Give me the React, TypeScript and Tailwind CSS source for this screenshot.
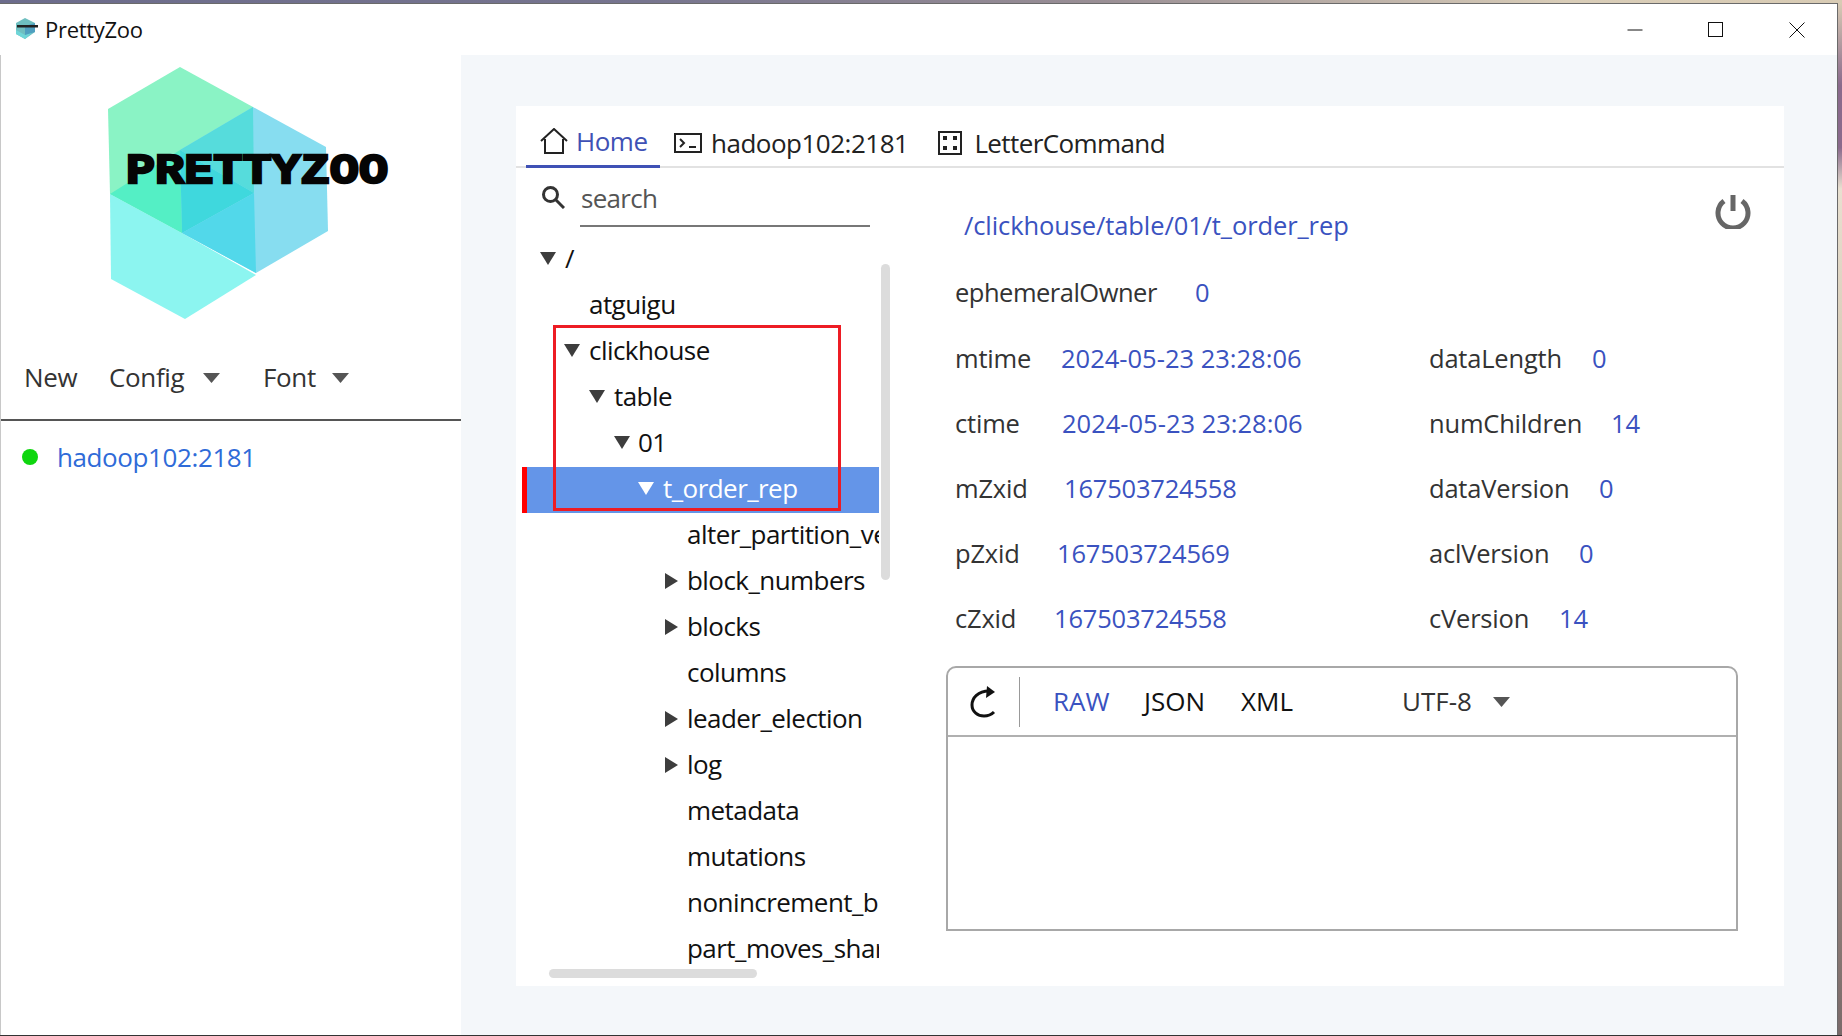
import React from "react";

const Caret = ({ dir = "down", color = "#3d3d3d", w = 16, h = 13 }: { dir?: "down" | "right"; color?: string; w?: number; h?: number }) => (
  <svg width={dir === "down" ? w : h} height={dir === "down" ? h : w} viewBox={dir === "down" ? "0 0 16 13" : "0 0 13 16"} preserveAspectRatio="none" className="shrink-0">
    <polygon points={dir === "down" ? "0,0 16,0 8,13" : "0,0 13,8 0,16"} fill={color} />
  </svg>
);

const tree: { t: string; caret: string; text: string; c?: "down" | "right"; sel?: boolean }[] = [
  { t: "/", caret: "left-[18px]", text: "left-[43px]", c: "down" },
  { t: "atguigu", caret: "", text: "left-[67px]" },
  { t: "clickhouse", caret: "left-[42px]", text: "left-[67px]", c: "down" },
  { t: "table", caret: "left-[67px]", text: "left-[92px]", c: "down" },
  { t: "01", caret: "left-[92px]", text: "left-[116px]", c: "down" },
  { t: "t_order_rep", caret: "left-[111px]", text: "left-[136px]", c: "down", sel: true },
  { t: "alter_partition_version", caret: "", text: "left-[165px]" },
  { t: "block_numbers", caret: "left-[143px]", text: "left-[165px]", c: "right" },
  { t: "blocks", caret: "left-[143px]", text: "left-[165px]", c: "right" },
  { t: "columns", caret: "", text: "left-[165px]" },
  { t: "leader_election", caret: "left-[143px]", text: "left-[165px]", c: "right" },
  { t: "log", caret: "left-[143px]", text: "left-[165px]", c: "right" },
  { t: "metadata", caret: "", text: "left-[165px]" },
  { t: "mutations", caret: "", text: "left-[165px]" },
  { t: "nonincrement_block_numbers", caret: "", text: "left-[165px]" },
  { t: "part_moves_shard", caret: "", text: "left-[165px]" },
];

const rows: { a: string; aw: string; b: string; bt: string; c?: string; cw?: string; d?: string }[] = [
  { a: "ephemeralOwner", aw: "w-[240px] tracking-[-0.5px]", b: "0", bt: "" },
  { a: "mtime", aw: "w-[106px] tracking-[-0.2px]", b: "2024-05-23 23:28:06", bt: "", c: "dataLength", cw: "w-[163px]", d: "0" },
  { a: "ctime", aw: "w-[107px] tracking-[-0.2px]", b: "2024-05-23 23:28:06", bt: "", c: "numChildren", cw: "w-[182px]", d: "14" },
  { a: "mZxid", aw: "w-[109px] tracking-[-0.2px]", b: "167503724558", bt: "tracking-[-0.2px]", c: "dataVersion", cw: "w-[170px]", d: "0" },
  { a: "pZxid", aw: "w-[102px] tracking-[-0.2px]", b: "167503724569", bt: "tracking-[-0.2px]", c: "aclVersion", cw: "w-[150px]", d: "0" },
  { a: "cZxid", aw: "w-[99px] tracking-[-0.2px]", b: "167503724558", bt: "tracking-[-0.2px]", c: "cVersion", cw: "w-[130px]", d: "14" },
];

const Logo = () => (
  <svg width="300" height="270" viewBox="100 60 300 270" className="block">
    <polygon points="180,67 253,107 254,193 182,233 110,194 108,109" fill="#8af3c5" />
    <polygon points="253,107 326,147 328,231 256,273 182,233 180,150" fill="#87ddf0" />
    <polygon points="110,194 182,233 256,275 185,319 111,279" fill="#8cf5f0" />
    <polygon points="253,107 254,193 180,150" fill="#56dcdc" />
    <polygon points="110,194 180,150 182,233" fill="#54efc5" />
    <polygon points="180,150 254,193 182,233" fill="#3fd8dd" />
    <polygon points="254,193 256,273 182,233" fill="#52d8ea" />
    <text x="126" y="183" textLength="262" lengthAdjust="spacingAndGlyphs" fontFamily="'Liberation Mono', monospace" fontWeight="700" fontSize="42" fill="#050505" stroke="#050505" strokeWidth="2.4">PRETTYZOO</text>
  </svg>
);

export default function App() {
  return (
    <div className="w-[1842px] h-[1036px] overflow-hidden flex flex-col bg-[linear-gradient(90deg,#6c6c8c_0%,#77758f_35%,#9a8f95_60%,#d9cdb8_85%,#d8cbb4_100%)] font-['Open_Sans','Noto_Sans',sans-serif]">
      <div className="h-[3px] shrink-0" />
      <div className="flex-1 min-h-0 flex">
        <div className="w-[1838px] flex flex-col border-t border-r border-[#6a6a6a] bg-white">
          {/* title bar */}
          <div className="h-[51px] shrink-0 flex items-center bg-white">
            <svg width="24" height="22" viewBox="0 0 24 22" className="ml-[15px] mt-[-2px]">
              <polygon points="1,5 10,0 20,5 20,14 10,21 1,16" fill="#6fbfc0" />
              <polygon points="1,12 10,17 20,12 10,21 1,16" fill="#6fd6d8" />
              <polygon points="10,8 20,5 20,14 10,17" fill="#4f9fc0" />
              <rect x="2" y="7" width="21" height="2.5" fill="#222" />
            </svg>
            <span className="ml-[6px] text-[22px] text-[#111] tracking-[-0.3px] pb-[1px]">PrettyZoo</span>
            <div className="ml-auto flex items-center mr-[32px]">
              <svg width="16" height="16" viewBox="0 0 16 16" className="mr-[65px]"><path d="M0.5 8h15" stroke="#111" strokeWidth="1" /></svg>
              <svg width="16" height="16" viewBox="0 0 16 16" className="mr-[65px]"><rect x="0.5" y="0.5" width="14" height="14" fill="none" stroke="#111" strokeWidth="1" /></svg>
              <svg width="16" height="16" viewBox="0 0 16 16"><path d="M0.5 0.5l15 15M15.5 0.5l-15 15" stroke="#111" strokeWidth="1" /></svg>
            </div>
          </div>
          <div className="flex-1 min-h-0 flex">
            {/* sidebar */}
            <div className="w-[461px] shrink-0 bg-white border-l-[1px] border-[#c8c8c8] flex flex-col">
              <div className="h-[281px] shrink-0 pl-[99px] pt-[5px] overflow-hidden"><Logo /></div>
              <div className="h-[85px] shrink-0 flex items-center text-[26px] text-[#333] tracking-[-0.35px] border-b-2 border-[#555]">
                <span className="ml-[23px] w-[85px]">New</span>
                <span className="w-[94px]">Config</span>
                <Caret dir="down" color="#555" w={17} h={10} />
                <span className="ml-[43px] w-[69px]">Font</span>
                <Caret dir="down" color="#555" w={17} h={10} />
              </div>
              <div className="flex items-center h-[72px] pl-[21px]">
                <span className="w-[16px] h-[16px] rounded-full bg-[#0fd60f]" />
                <span className="ml-[19px] text-[26px] text-[#2f6bd8] tracking-[-0.4px]">hadoop102:2181</span>
              </div>
            </div>
            {/* main */}
            <div className="flex-1 min-w-0 bg-[#f4f7fa] pt-[51px] pl-[55px] pr-[53px] pb-[49px]">
              <div className="h-full bg-white flex flex-col">
                {/* tabs */}
                <div className="h-[62px] shrink-0 flex items-stretch border-b-2 border-[#e2e2e2] text-[26px] tracking-[-0.5px]">
                  <div className="ml-[10px] w-[134px] flex items-center border-b-[3px] border-[#3f51b5] -mb-[2px] pl-[14px] pt-[11px] text-[#3f51b5]">
                    <svg width="28" height="26" viewBox="0 0 28 26" fill="none" stroke="#222" strokeWidth="2">
                      <path d="M1 13L14 1l13 12" />
                      <path d="M5 11v14h18V11" />
                    </svg>
                    <span className="ml-[8px]">Home</span>
                  </div>
                  <div className="flex items-center ml-[14px] pt-[14px] text-[#222]">
                    <svg width="28" height="20" viewBox="0 0 28 20" fill="none" stroke="#222" strokeWidth="2">
                      <rect x="1" y="1" width="26" height="18" />
                      <path d="M6 6l4 4-4 4M15 14h7" />
                    </svg>
                    <span className="ml-[9px]">hadoop102:2181</span>
                  </div>
                  <div className="flex items-center ml-[30px] pt-[14px] text-[#222]">
                    <svg width="24" height="24" viewBox="0 0 24 24" fill="none">
                      <rect x="1" y="1" width="22" height="22" stroke="#222" strokeWidth="2" />
                      <rect x="5" y="5" width="4" height="4" fill="#222" /><rect x="15" y="5" width="4" height="4" fill="#222" />
                      <rect x="5" y="15" width="4" height="4" fill="#222" /><rect x="15" y="15" width="4" height="4" fill="#222" />
                    </svg>
                    <span className="ml-[12px] tracking-[-0.6px]">LetterCommand</span>
                  </div>
                </div>
                <div className="flex-1 min-h-0 flex">
                  {/* tree column */}
                  <div className="w-[375px] shrink-0 flex flex-col relative">
                    <div className="h-[69px] shrink-0 flex items-start pl-[25px] pt-[17px]">
                      <svg width="24" height="24" viewBox="0 0 24 24" fill="none" stroke="#333" strokeWidth="3">
                        <circle cx="9.5" cy="9.5" r="7" /><path d="M15 15l8 8" />
                      </svg>
                      <div className="ml-[15px] w-[290px] h-[43px] border-b-2 border-[#777] text-[26px] leading-[29px] text-[#555] tracking-[-0.7px] pl-[1px] -mt-[1px]">search</div>
                    </div>
                    <div className="flex-1 min-h-0 flex">
                      <div className="w-[357px] ml-[6px] h-[736px] overflow-hidden text-[26px] text-[#111] tracking-[-0.55px]">
                        {tree.map((r) => (
                          <div key={r.t} className={r.sel ? "h-[46px] flex items-center pb-[4px] relative whitespace-nowrap bg-[#6495e8] text-white border-l-[5px] border-[#ff0000]" : "h-[46px] flex items-center pb-[4px] relative whitespace-nowrap"}>
                            {r.c && (
                              <span className={(r.c === "right" ? "absolute top-[14px] " : "absolute top-[15px] ") + r.caret}>
                                <Caret dir={r.c} color={r.sel ? "#fff" : "#3d3d3d"} />
                              </span>
                            )}
                            <span className={"absolute " + r.text}>{r.t}</span>
                          </div>
                        ))}
                      </div>
                      <div className="w-[9px] ml-[2px] mt-[27px] h-[316px] rounded-full bg-[#dcdcdc]" />
                    </div>
                    <div className="absolute left-[33px] bottom-[8px] w-[208px] h-[9px] rounded-full bg-[#dcdcdc]" />
                    <div className="absolute left-[37px] top-[157px] w-[288px] h-[186px] border-[3px] border-[#ed1c24]" />
                  </div>
                  {/* details */}
                  <div className="flex-1 min-w-0 pl-[55px] text-[25.5px]">
                    <div className="h-[77px] flex items-center pt-[38px]">
                      <span className="ml-[18px] text-[#3a52c0] tracking-[-0.1px]">/clickhouse/table/01/t_order_rep</span>
                    </div>
                    <div className="mt-[15px]">
                      {rows.map((r) => (
                        <div key={r.a} className="h-[65.2px] flex items-center pl-[9px]">
                          <div className="w-[474px] flex items-center shrink-0">
                            <span className={"text-[#333] " + r.aw}>{r.a}</span>
                            <span className={"text-[#3a52c0] " + r.bt}>{r.b}</span>
                          </div>
                          {r.c && (
                            <div className="flex items-center">
                              <span className={"text-[#333] tracking-[-0.2px] " + r.cw}>{r.c}</span>
                              <span className="text-[#3a52c0]">{r.d}</span>
                            </div>
                          )}
                        </div>
                      ))}
                    </div>
                    <div className="mt-[15px] w-[792px] h-[265px] border-2 border-[#a8a8a8] rounded-t-[10px] flex flex-col">
                      <div className="h-[69px] shrink-0 border-b-2 border-[#b0b0b0] flex items-center text-[26px]">
                        <svg width="26" height="32" viewBox="0 0 26 32" fill="none" className="ml-[22px]">
                          <path d="M19 5C8 5 2 12 2 19c0 7 6 11 12 11 4 0 8-2 10-4" stroke="#111" strokeWidth="3" />
                          <polygon points="17,0 25,6 16,12" fill="#111" />
                        </svg>
                        <div className="ml-[23px] w-px h-[50px] bg-[#999]" />
                        <span className="ml-[33px] w-[91px] text-[#3a52c0]">RAW</span>
                        <span className="w-[97px] text-[#111]">JSON</span>
                        <span className="w-[161px] text-[#111]">XML</span>
                        <span className="w-[91px] text-[#333]">UTF-8</span>
                        <Caret dir="down" color="#555" w={17} h={10} />
                      </div>
                    </div>
                    <svg width="36" height="36" viewBox="0 0 36 36" fill="none" stroke="#666" className="absolute left-[1715px] top-[193px]">
                      <path d="M9 8a15 15 0 1 0 18 0" strokeWidth="5" />
                      <path d="M18 2v16" strokeWidth="5" />
                    </svg>
                  </div>
                </div>
              </div>
            </div>
          </div>
        </div>
        <div className="w-[4px] shrink-0 bg-[linear-gradient(180deg,#d8cbb4_0%,#8a6a8c_8%,#8a6a8c_14%,#e8e0d0_18%,#c9b8a0_50%,#7a6a6a_100%)]" />
      </div>
      <div className="h-[1px] shrink-0 bg-[#333]" />
    </div>
  );
}
